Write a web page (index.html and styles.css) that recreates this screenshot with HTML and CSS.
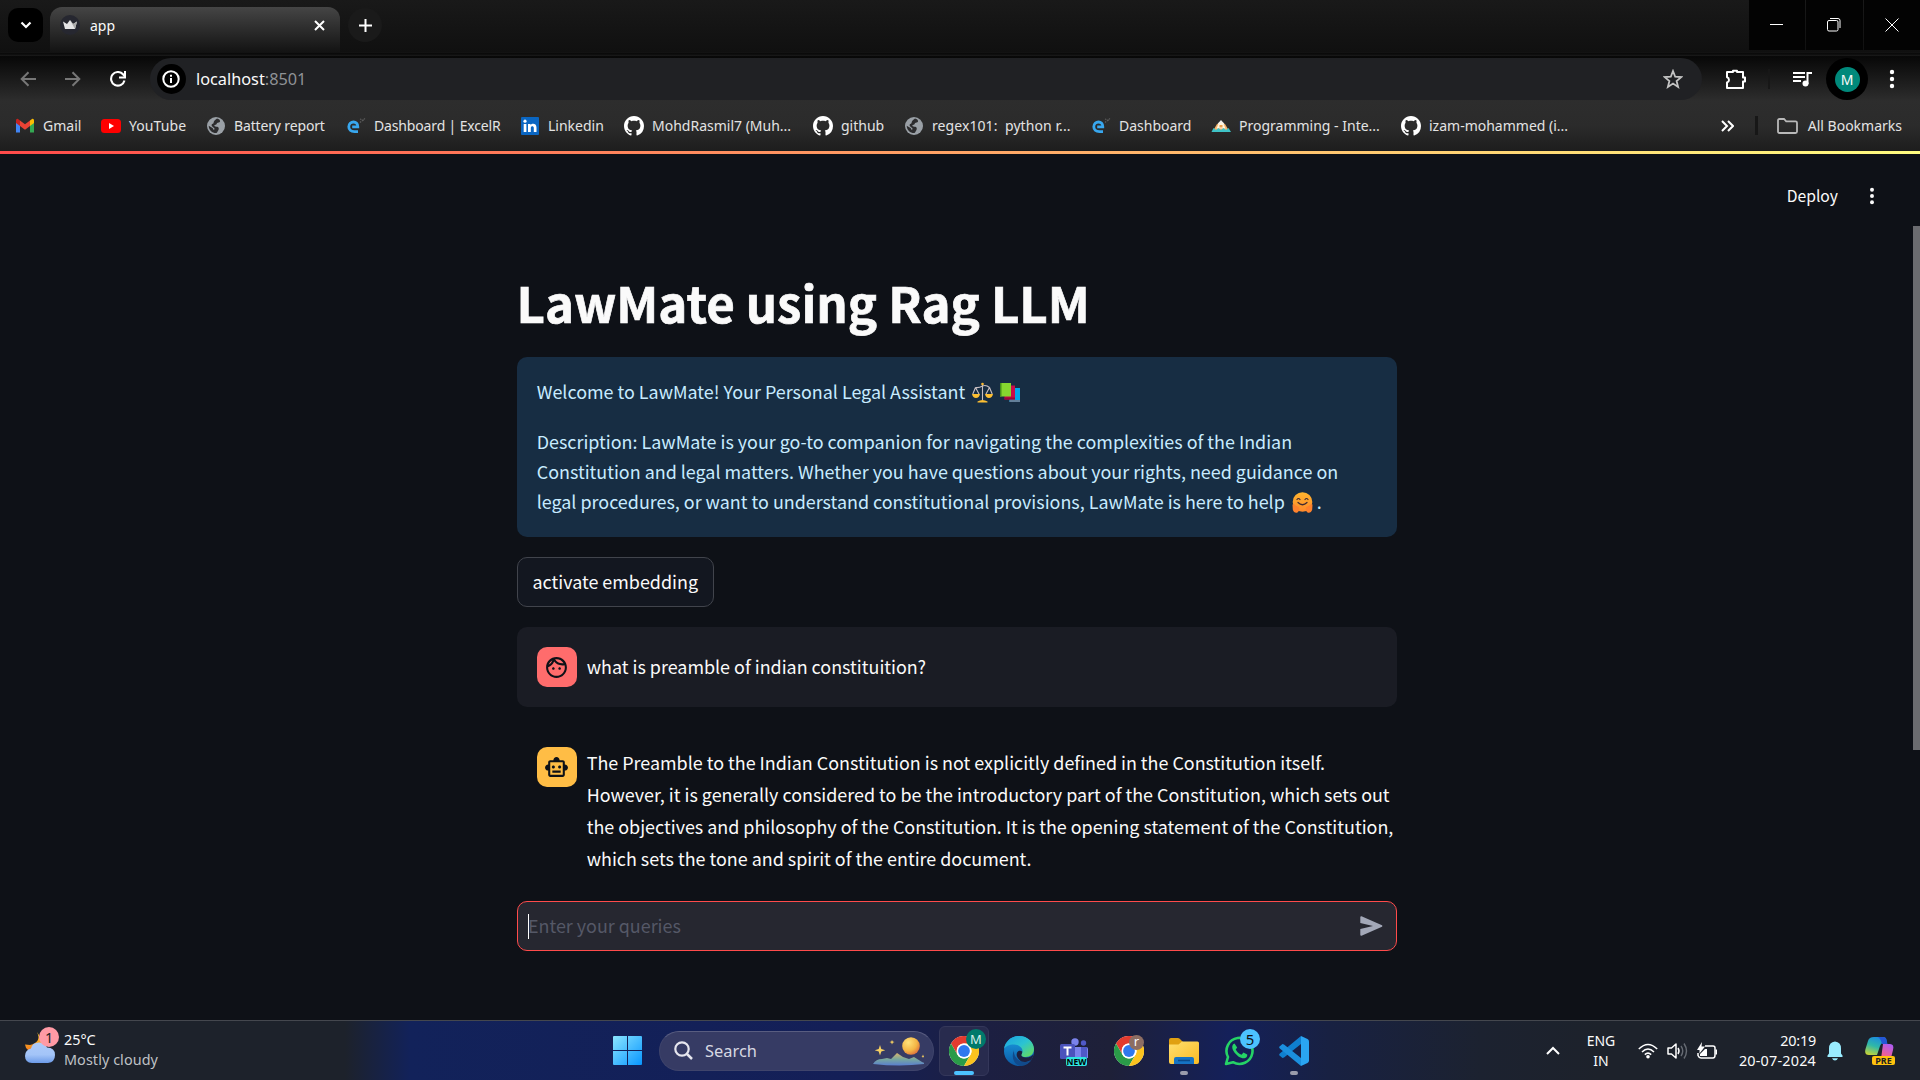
FILE: index.html
```html
<!DOCTYPE html>
<html lang="en">
<head>
<meta charset="utf-8">
<title>app</title>
<link rel="stylesheet" href="styles.css">
</head>
<body>
<svg width="0" height="0" class="defs" aria-hidden="true">
  <defs>
    <linearGradient id="edgeA" x1="0" y1="0" x2="1" y2="1"><stop offset="0" stop-color="#1ba0e2"/><stop offset=".5" stop-color="#2bc3d2"/><stop offset="1" stop-color="#6ddf4b"/></linearGradient>
    <linearGradient id="edgeB" x1="0" y1="0" x2="0" y2="1"><stop offset="0" stop-color="#1b9de2"/><stop offset="1" stop-color="#0c59a4"/></linearGradient>
    <linearGradient id="winG" x1="0" y1="0" x2="1" y2="1"><stop offset="0" stop-color="#8be5ff"/><stop offset="1" stop-color="#0896ff"/></linearGradient>
    <linearGradient id="folderG" x1="0" y1="0" x2="1" y2="1"><stop offset="0" stop-color="#ffdf70"/><stop offset="1" stop-color="#fbbb22"/></linearGradient>
    <linearGradient id="cloudG" x1="0" y1="0" x2="0" y2="1"><stop offset="0" stop-color="#aecbfa"/><stop offset=".6" stop-color="#a3c4f8"/><stop offset="1" stop-color="#6c9be8"/></linearGradient>
    <linearGradient id="moonG" x1="0" y1="0" x2="0" y2="1"><stop offset="0" stop-color="#ffd02e"/><stop offset="1" stop-color="#f2781c"/></linearGradient>
    <linearGradient id="hillG" x1="0" y1="0" x2="0" y2="1"><stop offset="0" stop-color="#d9b56c"/><stop offset=".5" stop-color="#77a79e"/><stop offset="1" stop-color="#5a7fd0"/></linearGradient>
    <radialGradient id="planetG" cx=".35" cy=".3" r=".8"><stop offset="0" stop-color="#ffe27a"/><stop offset=".6" stop-color="#f3b544"/><stop offset="1" stop-color="#d9653c"/></radialGradient>
    <linearGradient id="coA" x1=".6" y1="0" x2=".2" y2="1"><stop offset="0" stop-color="#1b8be0"/><stop offset=".5" stop-color="#2fb8a8"/><stop offset="1" stop-color="#c7d436"/></linearGradient>
    <linearGradient id="coB" x1=".7" y1="0" x2=".3" y2="1"><stop offset="0" stop-color="#b05cf0"/><stop offset=".55" stop-color="#ef5f96"/><stop offset="1" stop-color="#f7883e"/></linearGradient>
    <linearGradient id="hugG" x1="0" y1="0" x2="0" y2="1"><stop offset="0" stop-color="#ffb52e"/><stop offset="1" stop-color="#ff8a2b"/></linearGradient>
    <symbol id="globe" viewBox="0 0 20 20"><circle cx="10" cy="10" r="9" fill="#9aa0a6"/><path d="M11 2.600c2 .5 3 1.400 3 2.600 0 1.100-1 1.300-2.200 1.500-1.300.2-.9 1.800-2.200 2-1.200.2-1.600.8-.9 1.600.8.8 2.300.1 3.300.8 1 .8 1 2.500.2 3.400-.8.9-.6 1.900-1.800 2.600-4 .2-7.600-2.900-7.700-7.400l3.800 2.300c.9.6.3 1.500 1.200 1.700.9.100 1.200-1 .3-1.700-1.600-1.300-3-2.200-2.300-3.400.5-.9 1.700-.6 1.900-1.800.2-1.500.8-2.500 3.400-4.200z" fill="#2c2c2e"/></symbol>
    <symbol id="github" viewBox="0 0 16 16"><path fill="#fff" d="M8 0C3.580 0 0 3.580 0 8c0 3.540 2.290 6.530 5.470 7.590.4.070.55-.17.55-.38 0-.19-.01-.82-.01-1.490-2.010.37-2.530-.49-2.690-.94-.09-.23-.48-.94-.82-1.130-.28-.15-.68-.52-.01-.53.63-.01 1.080.58 1.230.82.72 1.210 1.870.87 2.330.66.070-.52.28-.87.51-1.070-1.780-.2-3.640-.89-3.640-3.950 0-.87.31-1.590.82-2.150-.08-.2-.36-1.020.08-2.120 0 0 .67-.21 2.200.82.64-.18 1.320-.27 2-.27s1.360.09 2 .27c1.530-1.040 2.200-.82 2.200-.82.44 1.100.16 1.920.08 2.120.51.56.82 1.270.82 2.150 0 3.070-1.870 3.750-3.650 3.950.29.25.54.73.54 1.480 0 1.070-.01 1.930-.01 2.200 0 .21.15.46.55.38A8.010 8.010 0 0 0 16 8c0-4.420-3.580-8-8-8z"/></symbol>
    <symbol id="excelr" viewBox="0 0 20 20"><path d="M12 15.700H8.500C4.800 15.700 2.800 13.600 2.800 10.800 2.800 7.800 5 6 7.500 6s4.400 1.700 4.300 4.800H6.200" fill="none" stroke="#38a7ee" stroke-width="2.800"/><path d="M14 6.500l5-4M14 3l4 1.500" stroke="#5c5c5c" stroke-width="1.200" stroke-dasharray="1.500 1"/></symbol>
    <symbol id="chrome" viewBox="0 0 30 30"><circle cx="15" cy="15" r="15" fill="#fff"/><path d="M2 7.500A15 15 0 0 1 28 7.500H15A7.500 7.500 0 0 0 8.500 11.250L8.400 18.600z" fill="#e33b2e"/><path d="M2 7.500A15 15 0 0 0 15 30l6.500-11.250A7.500 7.500 0 0 1 8.500 18.750z" fill="#2a9b48"/><path d="M28 7.500A15 15 0 0 1 15 30l6.500-11.250A7.500 7.500 0 0 0 15 7.500z" fill="#fcc31e"/><circle cx="15" cy="15" r="7.500" fill="#fff"/><circle cx="15" cy="15" r="5.900" fill="#2f78ee"/></symbol>
    <symbol id="dots" viewBox="0 0 6 20"><circle cx="3" cy="3" r="2.200"/><circle cx="3" cy="10" r="2.200"/><circle cx="3" cy="17" r="2.200"/></symbol>
  </defs>
</svg>

<header class="browser">
  <div class="tabstrip">
    <div class="tab-search"><svg width="12" height="8" viewBox="0 0 12 8"><path d="M1.500 1.500 6 6l4.500-4.500" fill="none" stroke="#fff" stroke-width="2.200"/></svg></div>
    <div class="tab">
      <svg class="favicon" width="20" height="20" viewBox="0 0 20 20"><circle cx="10" cy="10" r="10" fill="#262730"/><path d="M3 6.500 7 9l3-4 3 4 4-2.500-2 7.500H5z" fill="#e4e4e6"/><path d="M10 5l3 4 4-2.500-2 7.500z" fill="#aaa"/></svg>
      <span class="tab-title">app</span>
      <svg width="11" height="11" viewBox="0 0 11 11"><path d="M1 1l9 9M10 1l-9 9" stroke="#fff" stroke-width="2"/></svg>
    </div>
    <div class="new-tab"><svg width="13" height="13" viewBox="0 0 13 13"><path d="M6.500 0v13M0 6.500h13" stroke="#fff" stroke-width="2"/></svg></div>
    <div class="window-controls">
      <div class="wc"><svg width="13" height="13" viewBox="0 0 13 13"><path d="M0 6.500h13" stroke="#fff"/></svg></div>
      <div class="wc wide"><svg width="14" height="14" viewBox="0 0 14 14"><rect x=".5" y="2.500" width="10.500" height="10.500" rx="1.500" fill="none" stroke="#fff"/><path d="M3 .5h8a2 2 0 0 1 2 2V10" fill="none" stroke="#fff"/></svg></div>
      <div class="wc"><svg width="14" height="14" viewBox="0 0 14 14"><path d="M.5.5l13 13M13.500.5l-13 13" stroke="#fff"/></svg></div>
    </div>
  </div>

  <div class="toolbar">
    <div class="nav">
      <svg width="16" height="16" viewBox="0 0 16 16"><path d="M16 8H2M8.500 1.200 1.700 8l6.800 6.800" fill="none" stroke="#777" stroke-width="2"/></svg>
      <svg width="16" height="16" viewBox="0 0 16 16"><path d="M0 8h14M7.500 1.200 14.300 8l-6.800 6.800" fill="none" stroke="#777" stroke-width="2"/></svg>
      <svg width="16" height="16" viewBox="0 0 16 16"><path d="M14.500 9.500A6.800 6.800 0 1 1 13 3.300L15 5.500" fill="none" stroke="#fff" stroke-width="2.100"/><path d="M15 0v6.500H9" fill="none" stroke="#fff" stroke-width="2"/></svg>
    </div>
    <div class="omnibox">
      <div class="site-info"><svg width="18" height="18" viewBox="0 0 18 18"><circle cx="9" cy="9" r="7.700" fill="none" stroke="#fff" stroke-width="2"/><path d="M9 8v5M9 4.700v2" stroke="#fff" stroke-width="2"/></svg></div>
      <div class="url"><span class="host">localhost</span><span class="port">:8501</span></div>
      <svg class="star" width="20" height="20" viewBox="0 0 20 20"><path d="M10 2l2.200 5.700 6 .4-4.600 3.900 1.500 5.900L10 14.600l-5.100 3.300L6.400 12 1.800 8.100l6-.4z" fill="none" stroke="#c4c4c4" stroke-width="1.800"/></svg>
    </div>
    <div class="actions">
      <svg class="ext" width="22" height="20" viewBox="0 0 22 20"><path d="M2 3h6V1.800h4V3h6v5.500h2v4h-2V19H2v-5.500a2.700 2.700 0 0 0 0-5.200z" fill="none" stroke="#fff" stroke-width="2" stroke-linejoin="round"/></svg>
      <i class="tb-sep"></i>
      <svg class="media" width="20" height="16" viewBox="0 0 20 16"><path d="M0 2h12M0 6h12M0 10h8M14.500 13V2H19" fill="none" stroke="#fff" stroke-width="2"/><circle cx="12.500" cy="12.500" r="3" fill="#fff"/></svg>
      <div class="profile"><span>M</span></div>
      <svg class="menu" width="6" height="20" fill="#fff"><use href="#dots"/></svg>
    </div>
  </div>

  <div class="bookmarks">
    <div class="bm"><svg width="20" height="20" viewBox="0 0 20 20"><path d="M1 5v11.500h4V9z" fill="#4285f4"/><path d="M19 5v11.500h-4V9z" fill="#34a853"/><path d="M15 4.500 17 3c1-.6 2 .2 2 1.500V7l-4 3z" fill="#fbbc04"/><path d="M5 4.500 3 3C2 2.400 1 3.200 1 4.500V7l4 3z" fill="#c5221f"/><path d="M5 4.500 10 8.300l5-3.800V10l-5 3.700L5 10z" fill="#ea4335"/></svg><span>Gmail</span></div>
    <div class="bm"><svg width="20" height="20" viewBox="0 0 20 20"><rect y="3" width="20" height="14" rx="3.500" fill="#f00"/><path d="M8 7l5 3-5 3z" fill="#fff"/></svg><span class="wide">YouTube</span></div>
    <div class="bm"><svg width="20" height="20"><use href="#globe"/></svg><span class="snug">Battery report</span></div>
    <div class="bm"><svg width="20" height="20"><use href="#excelr"/></svg><span class="snug">Dashboard | ExcelR</span></div>
    <div class="bm"><svg width="20" height="20" viewBox="0 0 20 20"><rect x="1" y="1" width="18" height="18" rx="1" fill="#0a66c2"/><path d="M3.700 8h2.700v8H3.700zM8 8h2.600v1.200c1.300-2.200 5.900-2 5.900 2.300V16h-2.700v-4c0-2.300-3-2.200-3 0v4H8z" fill="#fff"/><circle cx="5" cy="5.200" r="1.600" fill="#fff"/></svg><span>Linkedin</span></div>
    <div class="bm"><svg width="20" height="20"><use href="#github"/></svg><span>MohdRasmil7 (Muh...</span></div>
    <div class="bm"><svg width="20" height="20"><use href="#github"/></svg><span>github</span></div>
    <div class="bm"><svg width="20" height="20"><use href="#globe"/></svg><span class="wide">regex101:&nbsp; python r...</span></div>
    <div class="bm"><svg width="20" height="20"><use href="#excelr"/></svg><span>Dashboard</span></div>
    <div class="bm"><svg width="20" height="20" viewBox="0 0 20 20"><path d="M10 4l4 4.500H6z" fill="#eee"/><path d="M6 8h8l3.500 6h-15z" fill="#f3b36a"/><path d="M8 6.500h4l2.500 6h-9z" fill="#fff4e0"/><path d="M8.500 9h3v2.500h-3z" fill="#e8a04e"/><path d="M2.500 12 5 14l2.500-2 2.500 2 2.500-2 2.500 2 2.500-2 2.500 4H.5z" fill="#3fc3c7"/></svg><span>Programming - Inte...</span></div>
    <div class="bm"><svg width="20" height="20"><use href="#github"/></svg><span>izam-mohammed (i...</span></div>
    <div class="bm-right">
      <svg width="13" height="12" viewBox="0 0 13 12"><path d="M1 1l5 5-5 5M7 1l5 5-5 5" fill="none" stroke="#fff" stroke-width="2"/></svg>
      <i class="bm-sep"></i>
      <svg width="21" height="16" viewBox="0 0 21 16"><path d="M1 2.500Q1 1 2.500 1H7l2.200 2.300h9.300Q20 3.300 20 4.800v8.700q0 1.500-1.500 1.500h-16Q1 15 1 13.500z" fill="none" stroke="#b9b9b9" stroke-width="1.800"/></svg>
      <span>All Bookmarks</span>
    </div>
  </div>
</header>

<main class="app">
  <div class="decoration"></div>
  <div class="app-header"><span class="deploy">Deploy</span><svg width="6" height="18" fill="#fafafa"><use href="#dots"/></svg></div>
  <div class="scrollbar"></div>
  <div class="column">
    <h1>LawMate using Rag LLM</h1>
    <section class="info">
      <p><span>Welcome to LawMate! Your Personal Legal Assistant</span>
        <svg class="scale" width="21" height="21" viewBox="0 0 21 21"><path d="M10.500 1v17M3.500 5.500q3.500.5 7-1.500 3.500-1.500 7 1.500M3.500 5.500.8 12M3.500 5.500 7 12M17.500 5.500 14 12M17.500 5.500 20.200 12" stroke="#c9bfc2" stroke-width="1.100" fill="none"/><circle cx="10.500" cy="2" r="1.300" fill="#fbb92f"/><path d="M0 12h8q-.8 4-4 4t-4-4zM13 12h8q-.8 4-4 4t-4-4zM5.500 19.500q5-3 10 0V20.500h-10z" fill="#fdbf32"/></svg>
        <svg class="books" width="21" height="21" viewBox="0 0 21 21"><path d="M9.500 6H20v14H9.500z" fill="#00a6ed"/><path d="M9.500 18H20v2H9.500z" fill="#637f99"/><path d="M4.500 3.500h10.500V17.500H4.500z" fill="#ca0b4a"/><path d="M4.500 15.500h10.500v2H4.500z" fill="#990838"/><path d="M0 1h11v13.500H0z" fill="#86d72f"/><path d="M0 1h1.500v13.500H0z" fill="#44911b"/></svg>
      </p>
      <p><span>Description: LawMate is your go-to companion for navigating the complexities of the Indian</span><br><span>Constitution and legal matters. Whether you have questions about your rights, need guidance on</span><br><span>legal procedures, or want to understand constitutional provisions, LawMate is here to help</span>
        <svg class="hug" width="21" height="21" viewBox="0 0 21 21"><circle cx="10.500" cy="10" r="9.800" fill="url(#hugG)"/><path d="M5 7.500q1.500-2 3 0M13 7.500q1.500-2 3 0M6 10.500q4.500 4.500 9 0" fill="none" stroke="#402a32" stroke-width="1.200" stroke-linecap="round"/><path d="M.5 12.500q2-1 3 1l3 1.500q2 3.500-1 5.500-3.500 1-4.700-3zM20.500 12.500q-2-1-3 1l-3 1.500q-2 3.500 1 5.500 3.500 1 4.700-3z" fill="#ff822d"/></svg>
        <span>.</span>
      </p>
    </section>
    <button class="activate">activate embedding</button>
    <div class="msg user">
      <div class="avatar"><svg width="25" height="25" viewBox="0 0 24 24"><path fill="#0e1117" d="M10.250 13c0 .69-.56 1.250-1.250 1.250S7.750 13.690 7.750 13s.56-1.250 1.250-1.250 1.250.56 1.250 1.250zM15 11.750c-.69 0-1.250.56-1.250 1.250s.56 1.250 1.250 1.250 1.250-.56 1.250-1.250-.56-1.250-1.250-1.250zm7 .25c0 5.520-4.480 10-10 10S2 17.520 2 12 6.480 2 12 2s10 4.480 10 10zM10.660 4.120C12.060 6.440 14.600 8 17.500 8c.46 0 .91-.05 1.340-.12C17.440 5.560 14.900 4 12 4c-.46 0-.91.050-1.340.12zM4.420 9.470a8.046 8.046 0 0 0 3.660-4.440 8.046 8.046 0 0 0-3.660 4.440zM20 12c0-.78-.12-1.530-.33-2.240-.7.150-1.420.24-2.170.24a10 10 0 0 1-7.760-3.690A10.016 10.016 0 0 1 4 11.860c.01.040 0 .09 0 .14 0 4.410 3.590 8 8 8s8-3.590 8-8z"/></svg></div>
      <p><span>what is preamble of indian constituition?</span></p>
    </div>
    <div class="msg bot">
      <div class="avatar"><svg width="25" height="25" viewBox="0 0 24 24"><path fill="#0e1117" d="M20 9V7c0-1.100-.9-2-2-2h-3c0-1.660-1.340-3-3-3S9 3.340 9 5H6c-1.100 0-2 .9-2 2v2c-1.660 0-3 1.340-3 3s1.340 3 3 3v4c0 1.100.9 2 2 2h12c1.100 0 2-.9 2-2v-4c1.660 0 3-1.340 3-3s-1.340-3-3-3zm-2 10H6V7h12v12zm-9-6c-.83 0-1.500-.67-1.500-1.500S8.170 10 9 10s1.500.67 1.500 1.500S9.830 13 9 13zm7.500-1.500c0 .83-.67 1.500-1.500 1.500s-1.500-.67-1.500-1.500.67-1.500 1.500-1.500 1.500.67 1.500 1.500zM8 15h8v2H8v-2z"/></svg></div>
      <p><span>The Preamble to the Indian Constitution is not explicitly defined in the Constitution itself.</span><br><span>However, it is generally considered to be the introductory part of the Constitution, which sets out</span><br><span>the objectives and philosophy of the Constitution. It is the opening statement of the Constitution,</span><br><span>which sets the tone and spirit of the entire document.</span></p>
    </div>
    <div class="chat-input"><i class="caret"></i><span>Enter your queries</span>
      <svg width="23" height="20" viewBox="0 0 23 20"><path d="M1.500.3 22 9.200q.9.800 0 1.500L1.500 19.700Q.4 20 .3 18.800V13L13 10 .3 7V1.200Q.4 0 1.500.3z" fill="#a3a8b8"/></svg>
    </div>
  </div>
</main>

<footer class="taskbar">
  <div class="weather">
    <svg width="36" height="38" viewBox="0 0 36 38"><path d="M13 5q5 10-7 13l-5-.5q1 8 12 7l6-10z" fill="url(#moonG)"/><path d="M8 36q-7-.5-7-7 0-6 6-7.500 1-6 8-6 6 0 8 5 8 0 8 7.500 0 7-7 8z" fill="url(#cloudG)"/><circle cx="25" cy="10" r="10" fill="#ff9aa5"/></svg>
    <span class="w-badge">1</span>
    <div class="w-text"><span>25°C</span><br><span class="t2">Mostly cloudy</span></div>
  </div>
  <div class="apps">
    <svg class="start" width="29" height="29" viewBox="0 0 29 29"><path d="M1 0h13v14H0V1q0-1 1-1zM15 0h13q1 0 1 1v13H15zM0 15h14v14H1q-1 0-1-1zM15 15h14v13q0 1-1 1H15z" fill="url(#winG)"/></svg>
    <div class="search">
      <svg width="19" height="19" viewBox="0 0 19 19"><circle cx="8" cy="8" r="6.700" fill="none" stroke="#e6e6ee" stroke-width="2.200"/><path d="M13 13l5 5" stroke="#e6e6ee" stroke-width="2.500"/></svg>
      <span>Search</span>
      <svg class="scene" width="51" height="30" viewBox="0 0 51 30"><circle cx="38" cy="10" r="8.800" fill="url(#planetG)"/><path d="M0 28q3-5 9-5l5-1 4 1 6-6 6 4 6 2 5-2 8 5q3 1 3 2-25 3-52 0z" fill="url(#hillG)"/><path d="M7 9l1.300 4 4 1.300-4 1.300-1.300 4-1.300-4-4-1.300 4-1.300zM19 4l.8 1.500L21.500 6l-1.700.7L19 8.500l-.7-1.800L16.500 6l1.800-.5zM50 18.500l.6 1.400.8.3-.8.5-.6 1.300-.6-1.300-1-.5 1-.3z" fill="#f5cf62"/></svg>
    </div>
    <div class="task active"><svg width="30" height="30"><use href="#chrome"/></svg><span class="badge green">M</span><i class="run on"></i></div>
    <div class="task"><svg width="30" height="30" viewBox="0 0 30 30"><circle cx="15" cy="15" r="15" fill="url(#edgeB)"/><path d="M0 13C1 5 8 0 15 0c9 0 15 6.500 15 13 0 5-4 8-8.500 8-3.500 0-4.500-1.200-4.500-2 0-1 1.500-1.700 1.500-4C18.500 11 14 8.500 10 8.500 5 8.500 1.500 10.500 0 13z" fill="url(#edgeA)"/><path d="M10 14c-1 6 4 12 11 12 3 0 5-.8 6.700-2.100A15 15 0 0 1 17 30C9.500 29 7 21 10 14z" fill="#114a8b"/><path d="M17.500 19.800c.5 1 2 1.700 4.500 1.700 3.800 0 6.500-1.700 7.500-3.500-.4 2.500-1.100 4.500-2.800 6-8 5-13-.5-14-4.500-.5-3.500 2.500-6 5.500-4 .3 2-1.200 3-.7 4.300z" fill="#1d2140"/></svg></div>
    <div class="task"><svg width="30" height="30" viewBox="0 0 30 30"><circle cx="16" cy="6" r="3.700" fill="#7b83eb"/><circle cx="24.500" cy="7" r="2.700" fill="#5059c9"/><path d="M11 11h16q2 0 2 2v9H11z" fill="#7b83eb"/><path d="M22 11h6v11h-6z" fill="#5059c9"/><rect x="1" y="8" width="15" height="15" rx="1.500" fill="#4b53bc"/><path d="M4.500 11.500h8M8.500 11.500v8" stroke="#fff" stroke-width="2"/></svg><span class="new">NEW</span></div>
    <div class="task"><svg width="30" height="30"><use href="#chrome"/></svg><span class="badge brown">r</span></div>
    <div class="task"><svg width="30" height="30" viewBox="0 0 30 30"><path d="M0 4q0-2 2-2h7q1.500 0 2.500 1.500L14 6l-3 4H0z" fill="#e0a012"/><path d="M0 8.500h9.500L13 5.500h15.500Q30 5.500 30 7v19q0 2-2 2H2q-2 0-2-2z" fill="url(#folderG)"/><path d="M5 28v-5q0-2 2-2h16q2 0 2 2v5z" fill="#1673c4"/><path d="M9 24.500h12" stroke="#0b4a8a" stroke-width="1.500"/></svg><i class="run"></i></div>
    <div class="task"><svg width="30" height="30" viewBox="0 0 30 30"><path d="M2 28l2-7A13 13 0 1 1 9 26.200z" fill="none" stroke="#25d366" stroke-width="2.600" stroke-linejoin="round"/><path d="M10.500 7.500c-2.500 1-3 4-1 7.500 3 5 7.500 7.700 11 7.300 2-.4 3-2 2.700-3.800l-3.700-1.900-2 2.200c-3-1.200-4.700-3-5.800-5.200l1.500-2z" fill="#25d366"/></svg><span class="badge blue">5</span></div>
    <div class="task"><svg width="30" height="30" viewBox="0 0 30 30"><path d="M22 0l6.500 3q1.500.8 1.500 2.500v19q0 1.700-1.500 2.500L22 30z" fill="#2aa5f2"/><path d="M22 0v8L5 21.500l-1.500.5L.8 19.800q-1.300-1 0-2.300z" fill="#0f7fcf"/><path d="M22 30v-8L5 8.500 3.500 8 .8 10.200q-1.300 1 0 2.300z" fill="#1b8fde"/></svg><i class="run"></i></div>
  </div>
  <div class="tray">
    <svg width="14" height="9" viewBox="0 0 14 9"><path d="M1 8l6-6 6 6" fill="none" stroke="#fff" stroke-width="2"/></svg>
    <div class="lang">ENG<br>IN</div>
    <svg width="20" height="16" viewBox="0 0 20 16"><path d="M.8 6q9.200-9 18.400 0M4 9q6-6 12 0M6.800 11.600q3.200-3 6.400 0" fill="none" stroke="#fff" stroke-width="1.500"/><circle cx="10" cy="13.700" r="1.800" fill="#fff"/></svg>
    <svg class="vol" width="21" height="18" viewBox="0 0 21 18"><path d="M1 6h3.500L9 2v14l-4.500-4H1z" fill="none" stroke="#fff" stroke-width="1.500" stroke-linejoin="round"/><path d="M11 6q2 3 0 6" fill="none" stroke="#fff" stroke-width="1.500"/><path d="M14 4q3.500 5 0 10M17 1.500q5 7.500 0 15" fill="none" stroke="#666b73" stroke-width="1.400"/></svg>
    <svg class="bat" width="21" height="18" viewBox="0 0 21 18"><path d="M8 4h8q2 0 2 2v7q0 3-2 3H4q-2 0-3-2.500V11" fill="none" stroke="#fff" stroke-width="1.500"/><path d="M18.500 7.500H20v5h-1.500z" fill="#fff"/><path d="M5 0 0 8h2.500v3.500L8 4.500H4.500zM3 12l5-5h2v7H3z" fill="#fff"/></svg>
    <div class="clock"><span class="time">20:19</span><br><span class="date">20-07-2024</span></div>
    <svg width="16" height="20" viewBox="0 0 16 20"><path d="M8 .5q6 .5 6 7v5l1.500 2v1.500H.5v-1.500l1.500-2v-5Q2 1 8 .5zM5 17.200h6q-1 2.300-3 2.300t-3-2.300z" fill="#99ecff"/></svg>
    <div class="copilot"><svg width="30" height="28" viewBox="0 0 30 28"><path d="M9 0h9q3 0 3.500 3l.5 3h-4q-2 0-3 3l-3 9H4q-5 0-3.500-6l2.500-8q1-4 6-4z" fill="url(#coA)"/><path d="M15 0h3q3 0 3.500 3l1 4H17q-1-5-4-7z" fill="#2557d6"/><path d="M18 7h7q4.500 0 3 6l-2 8q-1.500 6-6 6h-8q3-1 4-5z" fill="url(#coB)"/></svg><span class="pre">PRE</span></div>
  </div>
</footer>
</body>
</html>
```
FILE: styles.css
```css
* { box-sizing: border-box; }
body {
  margin: 0;
  width: 1920px;
  height: 1080px;
  overflow: hidden;
  display: flex;
  flex-direction: column;
  background: #0e1117;
  color: #fafafa;
  font-family: "Noto Sans", "Open Sans", sans-serif;
}
svg { display: block; flex: none; }
p, h1 { margin: 0; }
.defs { position: absolute; }
span { white-space: nowrap; }

/* Browser frame */
.browser { height: 151px; flex: none; background: #1d1d1d; }
.tabstrip {
  height: 57px;
  display: flex;
  align-items: flex-start;
  padding: 8px 0 0 8px;
  background: linear-gradient(#191919, #101010 52px, #151515 53px, #000 54px, #1e1e1e 55px, #111 56px, #000 57px);
}
.tab-search {
  width: 35px; height: 34px;
  padding-bottom: 1px;
  border-radius: 10px;
  background: #000;
  display: flex; align-items: center; justify-content: center;
}
.tab {
  width: 290px; height: 46px;
  margin-left: 7px;
  margin-top: -1px;
  padding: 0 15px 10px 10px;
  border-radius: 12px 12px 0 0;
  background: linear-gradient(#454545, #121212);
  display: flex; align-items: center;
}
.favicon { margin-right: 10px; }
.tab-title { flex: 1; font-size: 14px; }
.new-tab {
  width: 34px; height: 34px;
  margin-left: 8px;
  border-radius: 50%;
  background: #1a1a1a;
  display: flex; align-items: center; justify-content: center;
}
.window-controls { margin: -8px 0 0 auto; display: flex; gap: 1px; }
.wc {
  width: 56px; height: 50px;
  padding: 0 1px 1px 0;
  background: #030303;
  display: flex; align-items: center; justify-content: center;
}
.wc.wide { width: 57px; }
.toolbar {
  height: 44px;
  display: flex; align-items: center;
  background: linear-gradient(#080808, #2d2d2d);
}
.nav { width: 150px; padding-left: 20px; display: flex; gap: 29px; }
.omnibox {
  width: 1552px; height: 42px;
  border-radius: 21px;
  background: #202124;
  padding: 0 19px 0 7px;
  display: flex; align-items: center;
}
.site-info {
  width: 29px; height: 30px;
  padding-right: 1px;
  border-radius: 50%;
  background: #000;
  display: flex; align-items: center; justify-content: center;
}
.url { flex: 1; margin-left: 10px; font-size: 16.300px; display: flex; }
.port { color: #8f9296; }
.actions { display: flex; align-items: center; flex: 1; padding-left: 23px; }
.tb-sep { width: 2px; height: 20px; background: #171717; margin-left: 21px; }
.media { margin-left: 23px; }
.profile {
  width: 42px; height: 42px;
  margin-left: 13px;
  border-radius: 50%;
  background: #000;
  display: flex; align-items: center; justify-content: center;
}
.profile span {
  width: 25px; height: 25px;
  border-radius: 50%;
  background: #00897b;
  font: 14px/25px "Noto Sans", sans-serif;
  text-align: center;
}
.menu { margin-left: 21px; }
.bookmarks {
  height: 50px;
  padding: 0 18px 1px 15px;
  display: grid;
  grid-template-columns: 86px 105px 140px 174px 104px 189px 91px 187px 120px 190px 200px 1fr;
  align-items: center;
  font-size: 14px;
  color: #e3e3e3;
  background: linear-gradient(#2d2d2d, #2b2b2b 50%, #1d1d1d);
}
.bm, .bm-right { display: flex; align-items: center; gap: 8px; }
.bm span { padding-bottom: 1px; }
.snug { letter-spacing: -.15px; }
.bm .wide { letter-spacing: .08px; }
.bm-right { justify-content: flex-end; gap: 0; }
.bm-sep { width: 3px; height: 19px; background: #171717; margin: 0 19px 0 21px; }
.bm-right span { margin-left: 10px; padding-bottom: 1px; }

/* Streamlit page */
.app {
  flex: 1;
  position: relative;
  font-family: "Noto Sans CJK SC", "Noto Sans", sans-serif;
  font-size: 17.910px;
}
.decoration { height: 3px; background: linear-gradient(90deg, #ff4b4b, #fffd80); }
.app-header {
  height: 83px;
  padding-right: 45px;
  display: flex; align-items: center; justify-content: flex-end; gap: 31px;
}
.deploy { font-size: 15.700px; }
.scrollbar { position: absolute; right: 0; top: 75px; width: 7px; height: 524px; background: #6b6c70; }
.column { width: 880px; margin: 0 0 0 517px; display: flex; flex-direction: column; align-items: flex-start; }
h1 {
  font-size: 49.200px;
  line-height: 66px;
  margin: 32px 0 0 -.5px;
  height: 88px;
  font-weight: 700;
  letter-spacing: -.03px;
  -webkit-text-stroke: .7px #fafafa;
}
.info {
  width: 880px; height: 180px;
  padding: 19px 20px;
  border-radius: 10px;
  background: #172d43;
  color: #c7ebff;
  display: flex; flex-direction: column; gap: 20px;
  line-height: 30px;
}
.info p, .msg p { margin-left: -.3px; }
.info svg { display: inline-block; vertical-align: -4px; margin-left: 3px; }
.activate {
  height: 50px;
  margin: 20px 0;
  padding: 0 15px 2px 14.500px;
  border: 1px solid #41444c;
  border-radius: 10px;
  background: #131720;
  color: #fafafa;
  font: inherit;
}
.msg { width: 880px; padding: 20px; border-radius: 10px; display: flex; gap: 10px; line-height: 32px; }
.user { height: 80px; background: #1a1c24; align-items: center; }
.user p { padding-bottom: 2px; }
.bot { height: 174px; margin-top: 20px; }
.bot p { margin-top: -1px; }
.avatar {
  width: 40px; height: 40px;
  padding-right: 1px;
  flex: none;
  border-radius: 10px;
  background: #ff6c6c;
  display: flex; align-items: center; justify-content: center;
}
.bot .avatar { background: #ffbd45; }
.chat-input {
  width: 880px; height: 50px;
  border: 1px solid #ff4b4b;
  border-radius: 10px;
  background: #262730;
  color: #555867;
  display: flex; align-items: center;
  padding: 0 13px 0 10px;
}
.chat-input span { padding-bottom: 2px; margin-left: -1px; }
.chat-input svg { margin-left: auto; }
.caret { width: 1px; height: 25px; background: #fff; }

/* Taskbar */
.taskbar {
  height: 60px;
  flex: none;
  border-top: 1px solid #44474e;
  display: flex;
  font-size: 14.400px;
  line-height: 20px;
  background: linear-gradient(90deg, #1d222b 345px, #12225a 410px, #141f57 850px, #1c1f42 980px, #1e2038 1110px, #14205a 1230px, #182142 1330px, #1c2230 1480px, #1d222b 1600px);
}
.weather { width: 611px; padding: 6px 0 0 24px; display: flex; position: relative; }
.w-badge { position: absolute; left: 45px; top: 7px; color: #222; }
.w-text { margin: 3px 0 0 4px; }
.t2 { color: #bfc1c5; letter-spacing: .07px; }
.apps { display: flex; align-items: center; height: 59px; }
.start { margin-left: 2px; }
.search {
  width: 275px; height: 40px;
  margin: 0 5px 0 17px;
  border-radius: 20px;
  border: 1px solid #3f446b;
  border-top-color: #595d80;
  background: #363b64;
  display: flex; align-items: center;
  padding: 0 9px 0 14px;
  font-size: 16.400px;
  color: #d7d8e2;
}
.search span { margin-left: 12px; }
.scene { margin-left: auto; }
.task {
  width: 50px; height: 50px;
  margin-right: 5px;
  position: relative;
  display: flex; align-items: center; justify-content: center;
}
.active { background: #282b4e; border: 1px solid #34375a; border-radius: 6px; }
.badge {
  position: absolute; right: 3px; top: 3px;
  width: 20px; height: 20px;
  border-radius: 50%;
  text-align: center;
  font-size: 13px; line-height: 20px;
}
.green { background: #00796b; color: #d9eeea; right: 2px; top: 2px; }
.brown { background: #8d6e63; width: 15px; height: 15px; line-height: 13px; right: 10px; top: 9px; }
.blue { background: #4cc2ff; color: #111; font-size: 15px; right: 4px; }
.run { position: absolute; bottom: 1px; left: 21px; width: 8px; height: 4px; border-radius: 2px; background: #9a9cac; }
.run.on { width: 20px; left: 14px; background: #4cc2ff; bottom: 0; }
.new {
  position: absolute; left: 17px; bottom: 10px;
  width: 21px; height: 9px;
  border-radius: 2px;
  background: #2ee6e0;
  color: #000;
  font: 700 8.500px/9px "Noto Sans", sans-serif;
  text-align: center;
}
.tray { margin-left: auto; display: flex; align-items: center; height: 59px; padding-right: 25px; }
.lang { width: 34px; text-align: center; margin: 0 20px 0 24px; font-size: 14px; }
.vol { margin-left: 9px; }
.bat { margin-left: 9px; }
.clock { text-align: right; margin: 0 11px 0 20px; width: 78px; }
.time { letter-spacing: -.2px; }
.date { letter-spacing: .2px; }
.copilot { margin-left: 22px; position: relative; }
.pre {
  position: absolute; left: 7px; top: 19px;
  width: 23px; height: 9px;
  border-radius: 2px;
  background: #ffc20e;
  color: #222;
  font: 700 9px/9px "Noto Sans", sans-serif;
  text-align: center;
}
```
